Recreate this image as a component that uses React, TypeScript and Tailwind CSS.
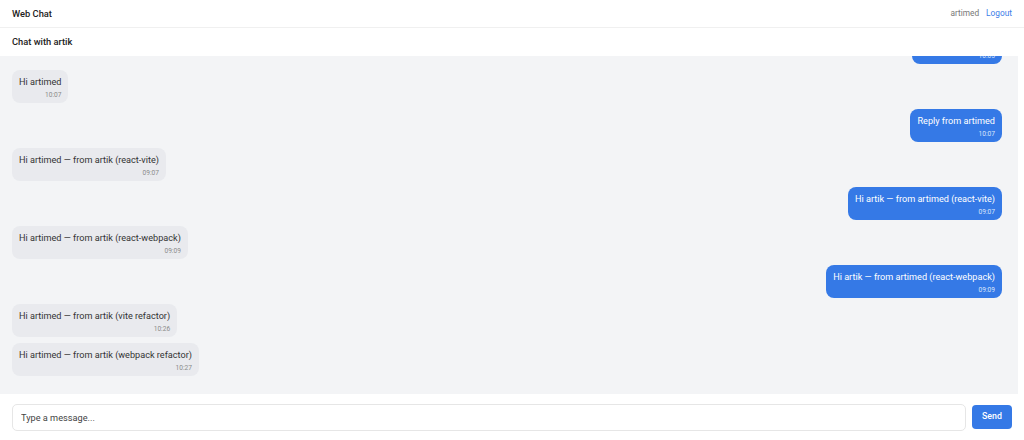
import {useState} from 'react'

type Message = {
  id: number
  mine: boolean
  text: string
  time: string
}

const messages: Message[] = [
  {id: 1, mine: true, text: 'Hello from artimed', time: '10:05'},
  {id: 2, mine: false, text: 'Hi artimed', time: '10:07'},
  {id: 3, mine: true, text: 'Reply from artimed', time: '10:07'},
  {id: 4, mine: false, text: 'Hi artimed — from artik (react-vite)', time: '09:07'},
  {id: 5, mine: true, text: 'Hi artik — from artimed (react-vite)', time: '09:07'},
  {id: 6, mine: false, text: 'Hi artimed — from artik (react-webpack)', time: '09:09'},
  {id: 7, mine: true, text: 'Hi artik — from artimed (react-webpack)', time: '09:09'},
  {id: 8, mine: false, text: 'Hi artimed — from artik (vite refactor)', time: '10:26'},
  {id: 9, mine: false, text: 'Hi artimed — from artik (webpack refactor)', time: '10:27'},
]

function Bubble({message}: {message: Message}) {
  return (
    <div className={message.mine ? 'flex justify-end' : 'flex justify-start'}>
      <div
        className={
          message.mine
            ? 'rounded-lg bg-[#3579e6] px-[7px] pt-1 pb-[2px] text-white'
            : 'rounded-lg bg-[#e9eaee] px-[7px] pt-1 pb-[2px] text-[#333]'
        }
      >
        <div className="text-[9.15px] leading-4">{message.text}</div>
        <div
          className={
            message.mine
              ? 'text-right text-[6.6px] leading-[11px] text-[#dbe6fb]'
              : 'text-right text-[6.6px] leading-[11px] text-[#8a8a8a]'
          }
        >
          {message.time}
        </div>
      </div>
    </div>
  )
}

export default function App() {
  const [draft, setDraft] = useState('')

  return (
    <div className="flex h-[440px] w-full flex-col bg-white font-['Roboto',sans-serif] text-[#222]">
      <header className="flex h-[28px] shrink-0 items-center justify-between border-b border-[#f0f0f0] px-3">
        <h1 className="text-[9.3px] font-medium">Web Chat</h1>
        <div className="flex items-center gap-[7px] text-[8.3px]">
          <span className="text-[#777]">artimed</span>
          <button className="text-[#3b7de8]">Logout</button>
        </div>
      </header>
      <div className="flex h-[28px] shrink-0 items-center px-3">
        <h2 className="text-[9.3px] font-medium">Chat with artik</h2>
      </div>
      <div className="flex min-h-0 flex-1">
        <div className="flex flex-1 flex-col justify-end gap-[6px] overflow-hidden bg-[#f3f4f6] pr-4 pb-[18px] pl-3">
          {messages.map((m) => (
            <Bubble key={m.id} message={m} />
          ))}
        </div>
        <div className="w-[6px] bg-white" />
      </div>
      <form
        className="flex h-[46px] shrink-0 items-center gap-[6px] px-3"
        onSubmit={(e) => {
          e.preventDefault()
          setDraft('')
        }}
      >
        <input
          value={draft}
          onChange={(e) => setDraft(e.target.value)}
          placeholder="Type a message..."
          className="h-[27px] flex-1 rounded-[5px] border border-[#e6e6e6] px-2 text-[9.2px] placeholder:text-[#444] focus:outline-none"
        />
        <button className="h-[24px] w-[40px] rounded-[4px] bg-[#3579e6] text-[8.8px] font-medium text-white">
          Send
        </button>
      </form>
    </div>
  )
}
